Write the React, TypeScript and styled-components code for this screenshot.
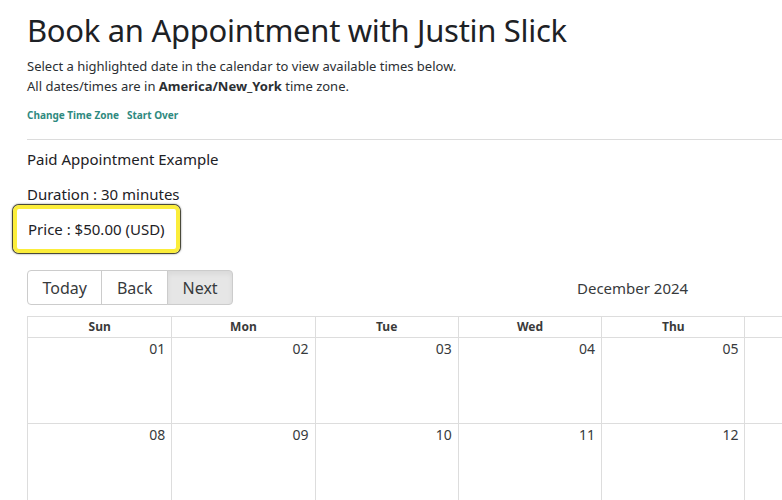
import styled, { createGlobalStyle } from "styled-components";

const GlobalStyle = createGlobalStyle`
  html, body {
    margin: 0;
    padding: 0;
    background: #fff;
    overflow: hidden;
  }
  body {
    font-family: "Noto Sans", "Open Sans", sans-serif;
    color: #212529;
  }
`;

const weekDays = ["Sun", "Mon", "Tue", "Wed", "Thu", "Fri", "Sat"];
const weeks = [
  ["01", "02", "03", "04", "05", "06", "07"],
  ["08", "09", "10", "11", "12", "13", "14"],
];

const App = () => {
  return (
    <>
      <GlobalStyle />
      <Page>
        <Title>Book an Appointment with Justin Slick</Title>
        <Intro>
          Select a highlighted date in the calendar to view available times below.
          <br />
          All dates/times are in <b>America/New_York</b> time zone.
        </Intro>
        <Links>
          <LinkItem href="#">Change Time Zone</LinkItem>
          <LinkItem href="#">Start Over</LinkItem>
        </Links>
        <Divider />
        <InfoLine>Paid Appointment Example</InfoLine>
        <InfoLine $gap={15}>Duration : 30 minutes</InfoLine>
        <PriceBox>Price : $50.00 (USD)</PriceBox>

        <Toolbar>
          <ButtonGroup>
            <ToolButton>Today</ToolButton>
            <ToolButton>Back</ToolButton>
            <ToolButton $active>Next</ToolButton>
          </ButtonGroup>
          <MonthLabel>December 2024</MonthLabel>
        </Toolbar>

        <MonthView>
          <HeaderRow>
            {weekDays.map((d) => (
              <HeaderCell key={d}>{d}</HeaderCell>
            ))}
          </HeaderRow>
          {weeks.map((week, i) => (
            <WeekRow key={i}>
              {week.map((day) => (
                <DayCell key={day}>{day}</DayCell>
              ))}
            </WeekRow>
          ))}
        </MonthView>
      </Page>
    </>
  );
};

const Page = styled.div`
  width: 1005px;
  padding: 10px 0 0 27px;
`;

const Title = styled.h1`
  margin: 0 0 6px;
  font-size: 31px;
  letter-spacing: -0.3px;
  line-height: 40px;
  font-weight: 400;
  color: #1d2125;
`;

const Intro = styled.p`
  margin: 0;
  font-size: 13px;
  line-height: 20px;
  color: #2b2f33;

  & b {
    font-weight: 700;
  }
`;

const Links = styled.div`
  margin-top: 12px;
  display: flex;
  gap: 8px;
  line-height: 14px;
`;

const LinkItem = styled.a`
  font-size: 10px;
  font-weight: 700;
  color: #2f8a80;
  text-decoration: none;
`;

const Divider = styled.hr`
  margin: 17px 0 0;
  border: 0;
  border-top: 1px solid #dcdcdc;
  width: 1005px;
`;

const InfoLine = styled.div<{ $gap?: number }>`
  margin-top: ${(p) => p.$gap ?? 9}px;
  font-size: 15px;
  line-height: 20px;
  color: #1d2125;
`;

const PriceBox = styled.div`
  display: inline-block;
  margin: 1px 0 0 -14px;
  padding: 10px 11px;
  font-size: 15px;
  line-height: 20px;
  color: #1d2125;
  border: 4px solid #fbed3a;
  border-radius: 6px;
  box-shadow: 0 0 0 1px #4a4a3a, 0 0 2px 1px rgba(0, 0, 0, 0.5);
`;

const Toolbar = styled.div`
  margin-top: 17px;
  display: flex;
  align-items: center;
  margin-bottom: 11px;
`;

const ButtonGroup = styled.div`
  display: flex;
`;

const ToolButton = styled.button<{ $active?: boolean }>`
  font-family: inherit;
  font-size: 16px;
  line-height: 20px;
  color: #373a3c;
  padding: 0 14.5px;
  margin: 0;
  border: 1px solid #cccccc;
  background: ${(p) => (p.$active ? "#e6e6e6" : "#ffffff")};
  box-shadow: ${(p) => (p.$active ? "inset 0 3px 5px rgba(0,0,0,0.06)" : "none")};
  border-radius: 0;
  height: 35px;

  & + & {
    margin-left: -1px;
  }
  &:first-child {
    border-radius: 4px 0 0 4px;
  }
  &:last-child {
    border-radius: 0 4px 4px 0;
  }
`;

const MonthLabel = styled.span`
  flex: 1;
  text-align: center;
  font-size: 15px;
  color: #373a3c;
`;

const MonthView = styled.div`
  border: 1px solid #dddddd;
  border-bottom: 0;
`;

const HeaderRow = styled.div`
  display: grid;
  grid-template-columns: repeat(7, 1fr);
  border-bottom: 1px solid #dddddd;
`;

const HeaderCell = styled.div`
  text-align: center;
  font-size: 12px;
  font-weight: 700;
  line-height: 20px;
  color: #3a3a3a;

  & + & {
    border-left: 1px solid #dddddd;
  }
`;

const WeekRow = styled.div`
  display: grid;
  grid-template-columns: repeat(7, 1fr);
  height: 85px;
  border-bottom: 1px solid #dddddd;
`;

const DayCell = styled.div`
  text-align: right;
  padding: 1px 6px 0 0;
  font-size: 14px;
  line-height: 20px;
  color: #373a3c;

  & + & {
    border-left: 1px solid #dddddd;
  }
`;

export default App;
